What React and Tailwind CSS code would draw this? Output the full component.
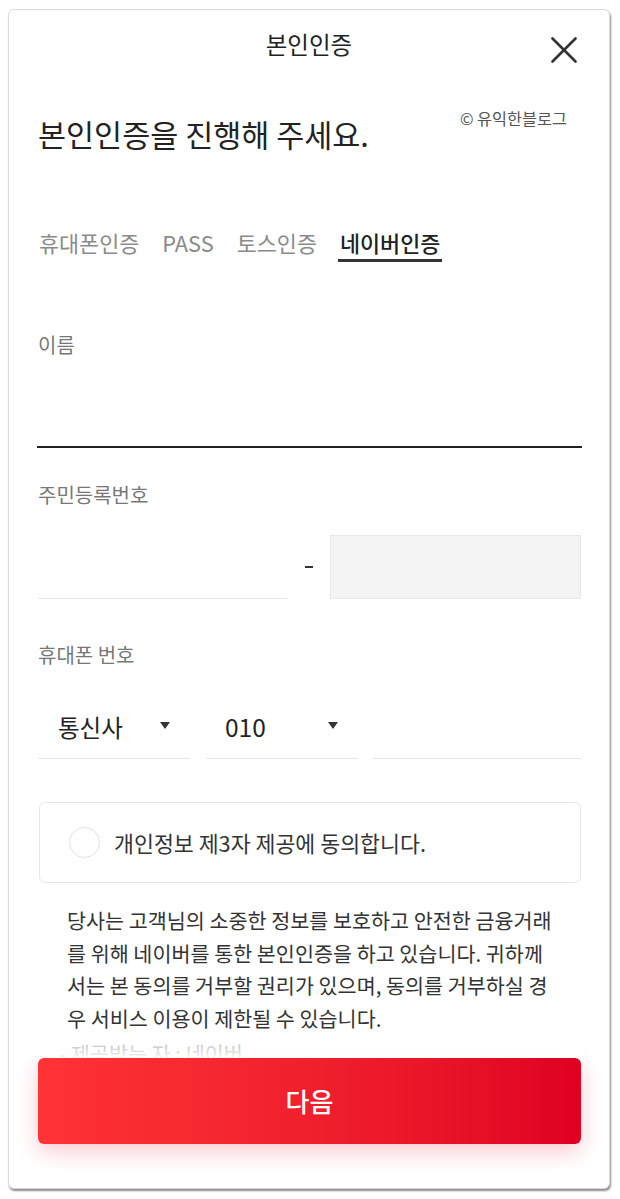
export default function App() {
  const font = { fontFamily: '"Noto Sans CJK KR", "Noto Sans", sans-serif' };
  return (
    <div className="min-h-[1199px] bg-white pt-[9px] pl-[8px]" style={font}>
      <div className="w-[602px] h-[1180px] flex flex-col bg-white border border-[#d9d9d9] rounded-[6px] shadow-[1px_2px_2px_rgba(0,0,0,0.45)] overflow-hidden">
        <div className="relative flex-1 min-h-0 overflow-hidden">
          <div className="relative h-[67px] flex items-center justify-center">
            <span className="text-[23.5px] leading-[30px] text-[#222]">본인인증</span>
            <button className="absolute right-[32px] top-[27px] w-[26px] h-[26px]">
              <svg viewBox="0 0 26 26" width="26" height="26">
                <line x1="1.5" y1="1.5" x2="24.5" y2="24.5" stroke="#333" strokeWidth="2.6" strokeLinecap="round" />
                <line x1="24.5" y1="1.5" x2="1.5" y2="24.5" stroke="#333" strokeWidth="2.6" strokeLinecap="round" />
              </svg>
            </button>
          </div>
          <div className="absolute right-[42px] top-[98px] text-[16.3px] leading-[20px] text-[#555]">© 유익한블로그</div>

          <div className="pl-[29px] pr-[28px]">
            <h1 className="mt-[40px] text-[30.5px] leading-[34px] text-[#222]">본인인증을 진행해 주세요.</h1>

            <div className="mt-[78px] flex gap-[23px] pl-[1px] text-[21.8px] leading-[28px]">
              <span className="text-[#8a8a8a] pb-[5px]">휴대폰인증</span>
              <span className="text-[#8a8a8a] pb-[5px]">PASS</span>
              <span className="text-[#8a8a8a] pb-[5px]">토스인증</span>
              <span className="text-[#222] font-medium pb-[2px] border-b-[3px] border-[#333] px-[2px] -mx-[2px]">네이버인증</span>
            </div>

            <div className="mt-[70px] text-[20px] leading-[26px] text-[#777]">이름</div>
            <div className="mt-[26px] h-[64px] border-b-2 border-[#222] -ml-[1px] -mr-[1px]"></div>

            <div className="mt-[34px] text-[20px] leading-[26px] text-[#777]">주민등록번호</div>
            <div className="mt-[27px] flex items-center">
              <div className="flex-1 h-[64px] border-b border-[#e6e6e6]"></div>
              <div className="w-[43px] flex justify-center">
                <div className="w-[8px] h-[2px] bg-[#333]"></div>
              </div>
              <div className="flex-1 h-[64px] bg-[#f4f4f4] border border-[#e8e8e8]"></div>
            </div>

            <div className="mt-[43px] text-[20px] leading-[26px] text-[#777]">휴대폰 번호</div>
            <div className="mt-[27px] flex">
              <div className="w-[152px] h-[64px] border-b border-[#e6e6e6] flex items-center justify-between pl-[20px] pr-[20px]">
                <span className="text-[23.5px] leading-[30px] text-[#222]">통신사</span>
                <svg width="10" height="7" viewBox="0 0 10 7" className="mt-[-2px]"><polygon points="0,0 10,0 5,7" fill="#333" /></svg>
              </div>
              <div className="w-[152px] ml-[16px] h-[64px] border-b border-[#e6e6e6] flex items-center justify-between pl-[19px] pr-[20px]">
                <span className="text-[24.5px] leading-[30px] text-[#222]">010</span>
                <svg width="10" height="7" viewBox="0 0 10 7" className="mt-[-2px]"><polygon points="0,0 10,0 5,7" fill="#333" /></svg>
              </div>
              <div className="flex-1 ml-[15px] h-[64px] border-b border-[#e6e6e6]"></div>
            </div>

            <div className="mt-[43px] ml-[1px] h-[81px] border border-[#e8e8e8] rounded-[6px] flex items-center pl-[29px]">
              <div className="w-[31px] h-[31px] rounded-full border-[1.5px] border-[#e2e2e2]"></div>
              <span className="ml-[14px] text-[21.7px] leading-[28px] text-[#333]">개인정보 제3자 제공에 동의합니다.</span>
            </div>

            <div className="mt-[21px] pl-[29px] text-[20.7px] leading-[32.7px] text-[#333] whitespace-nowrap">
              <div>당사는 고객님의 소중한 정보를 보호하고 안전한 금융거래</div>
              <div>를 위해 네이버를 통한 본인인증을 하고 있습니다. 귀하께</div>
              <div>서는 본 동의를 거부할 권리가 있으며, 동의를 거부하실 경</div>
              <div>우 서비스 이용이 제한될 수 있습니다.</div>
              <div className="mt-[2px] -ml-[8px] text-[#a0a0a0]">- 제공받는 자 : 네이버</div>
            </div>
          </div>
          <div className="absolute left-0 right-0 bottom-0 h-[24px] bg-gradient-to-b from-white/0 to-white/90"></div>
        </div>

        <div className="shrink-0 pl-[29px] pr-[28px] pb-[44px]">
          <button className="w-full h-[86px] rounded-[6px] bg-gradient-to-r from-[#ff3236] to-[#e00022] shadow-[0_8px_22px_rgba(235,20,40,0.22)] flex items-center justify-center">
            <span className="text-[26px] leading-[32px] text-white font-medium">다음</span>
          </button>
        </div>
      </div>
    </div>
  );
}
